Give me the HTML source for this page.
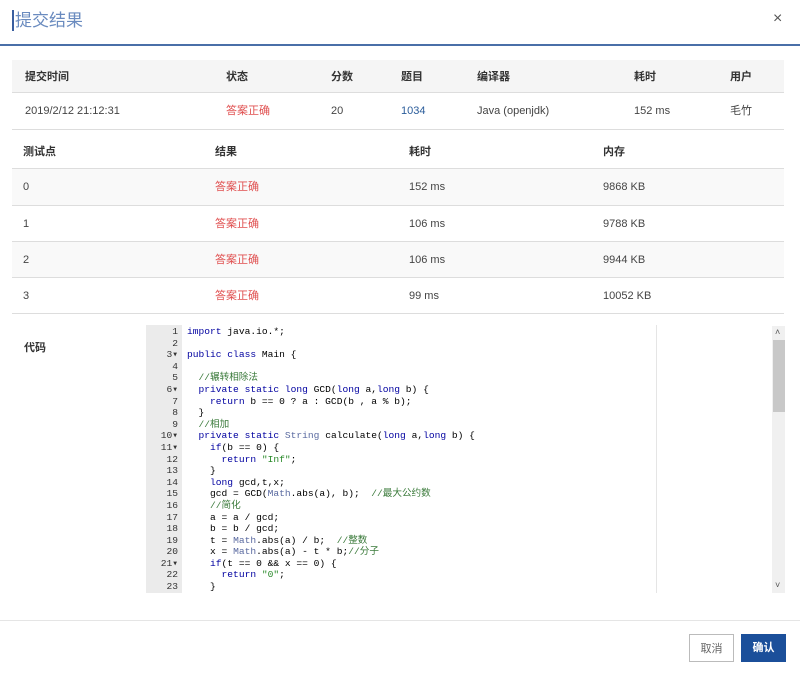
<!DOCTYPE html>
<html><head><meta charset="utf-8"><style>
body{margin:0;width:800px;height:677px;background:#fff;font-family:"Liberation Sans","Noto Sans CJK SC",sans-serif;position:relative;overflow:hidden;color:#333}
.title{position:absolute;left:12px;top:10px;font-size:17px;color:#6a8bbf;border-left:2px solid #3a5fa0;padding-left:1px;line-height:21px}
.close{position:absolute;left:773px;top:10px;font-size:16px;color:#555;line-height:18px}
.hl{position:absolute;left:0;top:44px;width:800px;height:2px;background:#4a6fa8}
.row{position:absolute;left:12px;width:772px;font-size:11px}
.row span{position:absolute;line-height:14px;height:14px}
.th{background:#f5f5f5;font-weight:bold;color:#333;border-bottom:1px solid #ddd}
.td{border-bottom:1px solid #ddd;color:#444}
.red{color:#e05050}
.blue{color:#2a5c9a}
.gut{position:absolute;left:146px;top:325px;width:36px;height:268px;background:#ebebeb}
pre{margin:0;font-family:"Liberation Mono","Noto Sans CJK SC",monospace;font-size:9.6px;line-height:11.6px}
pre span{line-height:11.6px}
.ln{position:absolute;left:146px;top:326px;width:32px;text-align:right;color:#333}
.code{position:absolute;left:187px;top:326px;color:#000;width:470px;height:267px;overflow:hidden}
.k{color:#0000a0}.c{color:#3a7a3a}.s{color:#2a8a2a}.m{color:#5a6aa0}
.vl{position:absolute;left:656px;top:325px;width:1px;height:268px;background:#e5e5e5}
.sb{position:absolute;left:772px;top:326px;width:13px;height:267px;background:#f0f0f0}
.th2{position:absolute;left:773px;top:340px;width:12px;height:72px;background:#c8c8c8}
.fl{position:absolute;left:0;top:620px;width:800px;height:1px;background:#e5e5e5}
.btn{position:absolute;top:634px;height:28px;width:45px;font-size:11px;line-height:28px;text-align:center;box-sizing:border-box}
</style></head><body>
<div class="title">提交结果</div><div class="close">×</div><div class="hl"></div>
<div class="row th" style="top:60px;height:32px"><span style="left:13px;top:10px">提交时间</span><span style="left:214px;top:10px">状态</span><span style="left:319px;top:10px">分数</span><span style="left:389px;top:10px">题目</span><span style="left:465px;top:10px">编译器</span><span style="left:622px;top:10px">耗时</span><span style="left:718px;top:10px">用户</span></div>
<div class="row td" style="top:93px;height:36px"><span style="left:13px;top:11px">2019/2/12 21:12:31</span><span class="red" style="left:214px;top:11px">答案正确</span><span style="left:319px;top:11px">20</span><span class="blue" style="left:389px;top:11px">1034</span><span style="left:465px;top:11px">Java (openjdk)</span><span style="left:622px;top:11px">152 ms</span><span style="left:718px;top:11px">毛竹</span></div>
<div class="row th" style="top:130px;height:38px;background:#fff"><span style="left:11px;top:15px">测试点</span><span style="left:203px;top:15px">结果</span><span style="left:397px;top:15px">耗时</span><span style="left:591px;top:15px">内存</span></div>
<div class="row td" style="top:169px;height:36px;background:#f9f9f9"><span style="left:11px;top:11px">0</span><span class="red" style="left:203px;top:11px">答案正确</span><span style="left:397px;top:11px">152 ms</span><span style="left:591px;top:11px">9868 KB</span></div>
<div class="row td" style="top:206px;height:35px"><span style="left:11px;top:11px">1</span><span class="red" style="left:203px;top:11px">答案正确</span><span style="left:397px;top:11px">106 ms</span><span style="left:591px;top:11px">9788 KB</span></div>
<div class="row td" style="top:242px;height:35px;background:#f9f9f9"><span style="left:11px;top:11px">2</span><span class="red" style="left:203px;top:11px">答案正确</span><span style="left:397px;top:11px">106 ms</span><span style="left:591px;top:11px">9944 KB</span></div>
<div class="row td" style="top:278px;height:35px"><span style="left:11px;top:11px">3</span><span class="red" style="left:203px;top:11px">答案正确</span><span style="left:397px;top:11px">99 ms</span><span style="left:591px;top:11px">10052 KB</span></div>
<div style="position:absolute;left:24px;top:341px;font-size:11px;font-weight:bold;line-height:14px">代码</div>
<div class="gut"></div>
<pre class="ln">1
2
3▾
4
5
6▾
7
8
9
10▾
11▾
12
13
14
15
16
17
18
19
20
21▾
22
23</pre>
<pre class="code"><span class="k">import</span> java.io.*;

<span class="k">public class</span> Main {

  <span class="c">//辗转相除法</span>
  <span class="k">private static long</span> GCD(<span class="k">long</span> a,<span class="k">long</span> b) {
    <span class="k">return</span> b == 0 ? a : GCD(b , a % b);
  }
  <span class="c">//相加</span>
  <span class="k">private static</span> <span class="m">String</span> calculate(<span class="k">long</span> a,<span class="k">long</span> b) {
    <span class="k">if</span>(b == 0) {
      <span class="k">return</span> <span class="s">"Inf"</span>;
    }
    <span class="k">long</span> gcd,t,x;
    gcd = GCD(<span class="m">Math</span>.abs(a), b);  <span class="c">//最大公约数</span>
    <span class="c">//简化</span>
    a = a / gcd;
    b = b / gcd;
    t = <span class="m">Math</span>.abs(a) / b;  <span class="c">//整数</span>
    x = <span class="m">Math</span>.abs(a) - t * b;<span class="c">//分子</span>
    <span class="k">if</span>(t == 0 &amp;&amp; x == 0) {
      <span class="k">return</span> <span class="s">"0"</span>;
    }</pre>
<div class="vl"></div>
<div class="sb"></div><div class="th2"></div>
<div style="position:absolute;left:775px;top:327px;font-size:9px;color:#555;line-height:10px">˄</div>
<div style="position:absolute;left:775px;top:580px;font-size:9px;color:#555;line-height:10px">˅</div>
<div class="fl"></div>
<div class="btn" style="left:689px;border:1px solid #bbb;color:#666">取消</div>
<div class="btn" style="left:741px;background:#1b4f9a;color:#fff;font-weight:bold">确认</div>
</body></html>
